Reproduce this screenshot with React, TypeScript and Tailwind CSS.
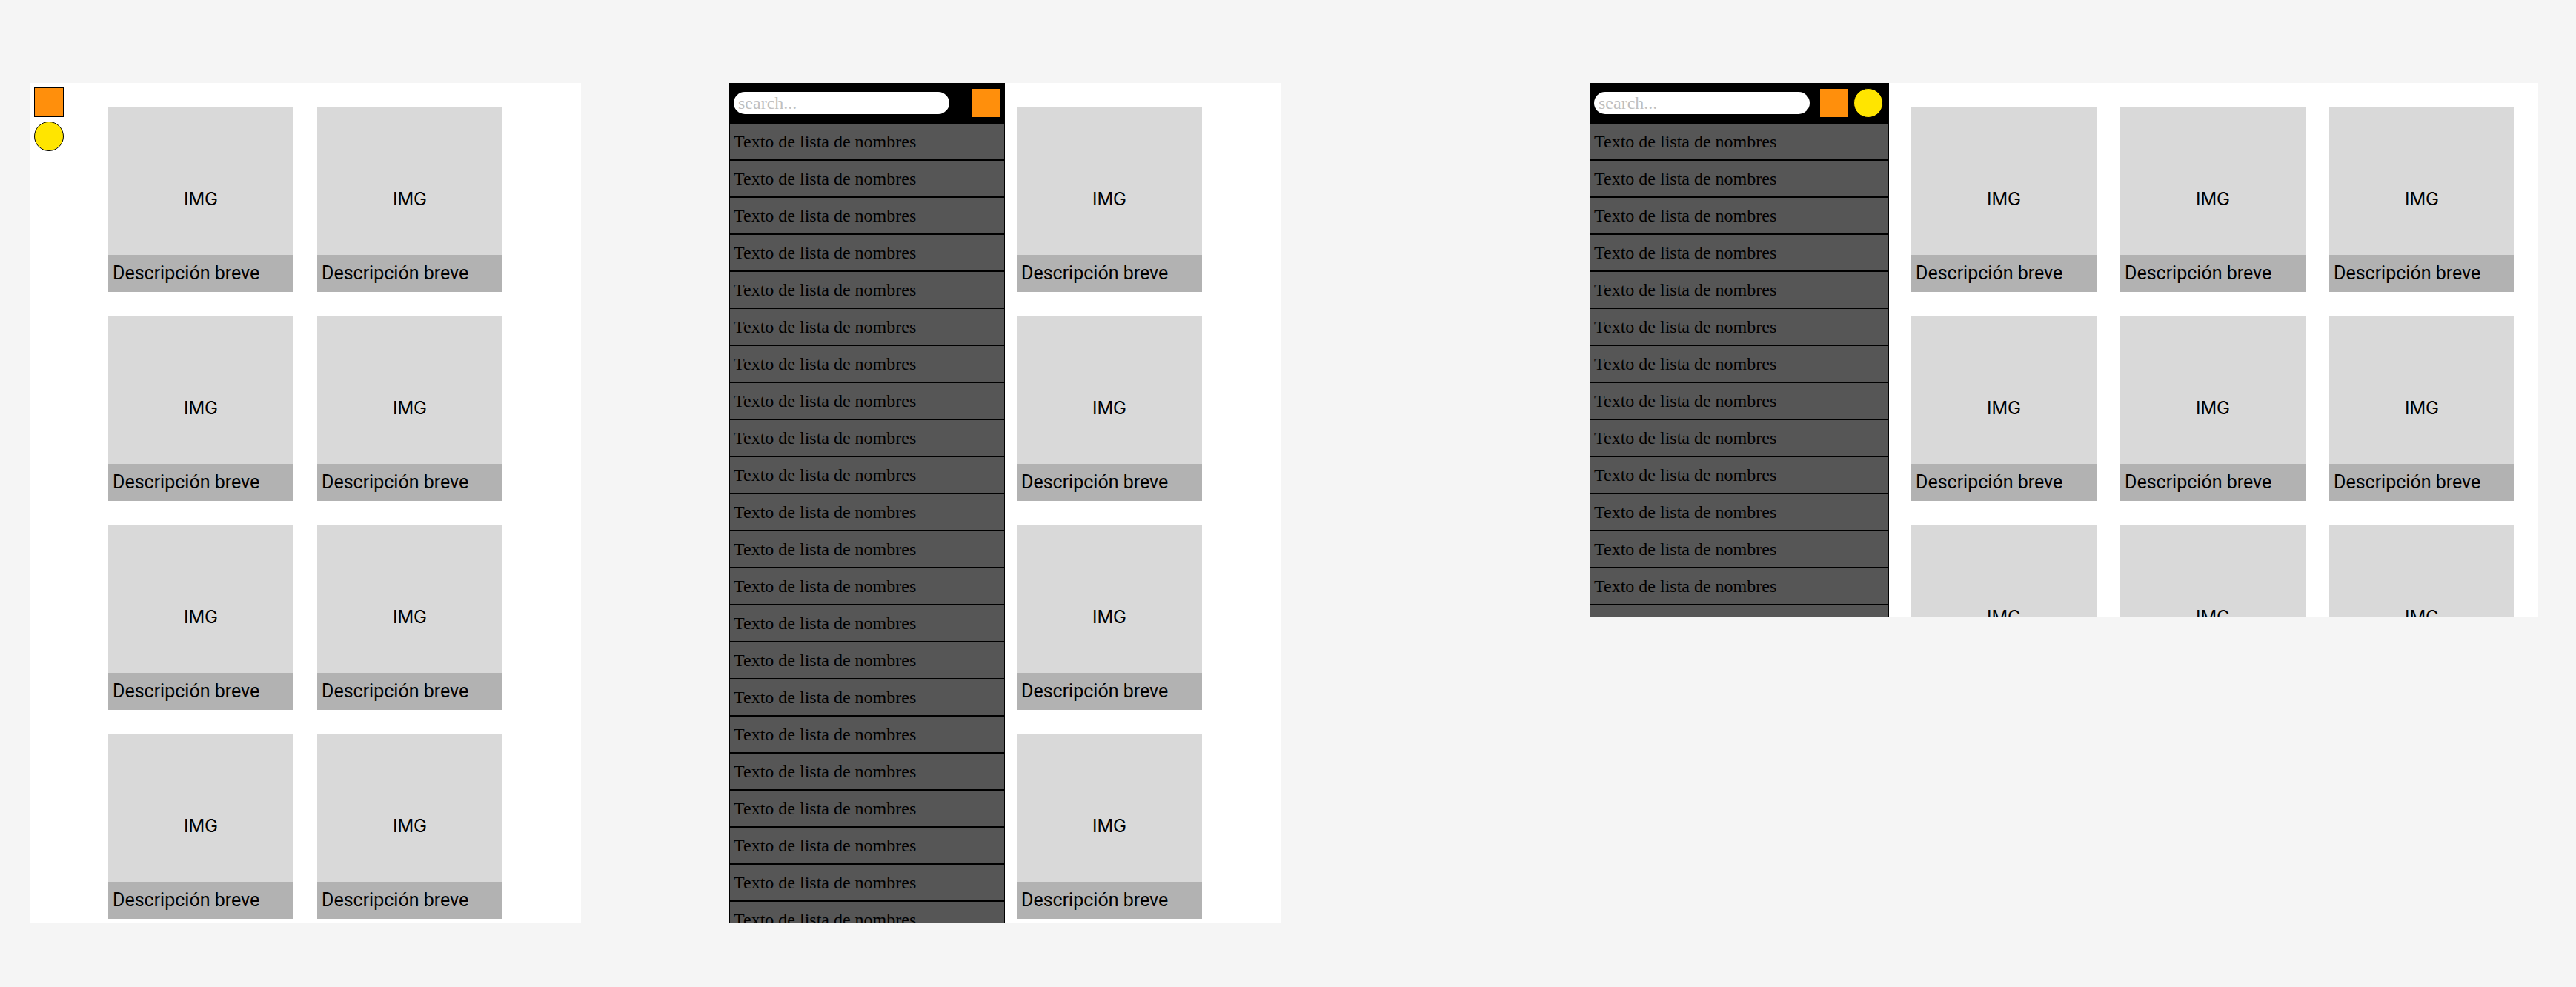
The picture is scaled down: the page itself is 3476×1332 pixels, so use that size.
const NAMES = Array.from({ length: 22 }, () => "Texto de lista de nombres");

function SquareButton() {
  return (
    <button
      type="button"
      aria-label="Lista"
      className="size-10 shrink-0 border border-black bg-[#ff8f0c]"
    />
  );
}

function RoundButton() {
  return (
    <button
      type="button"
      aria-label="Opciones"
      className="size-10 shrink-0 rounded-full border border-black bg-[#ffe500]"
    />
  );
}

function Card() {
  return (
    <article className="relative flex aspect-square items-center justify-center bg-[#d9d9d9]">
      <span className="font-['Inter',sans-serif] text-[24px] leading-7">IMG</span>
      <p className="absolute inset-x-0 bottom-0 flex h-[50px] items-center bg-[#b2b2b2] px-1.5 font-['Roboto',sans-serif] text-[25px] leading-8 whitespace-nowrap">
        Descripción breve
      </p>
    </article>
  );
}

function Cards({ count }: { count: number }) {
  return (
    <>
      {Array.from({ length: count }, (_, i) => (
        <Card key={i} />
      ))}
    </>
  );
}

function Sidebar({ id, wide = false }: { id: string; wide?: boolean }) {
  return (
    <aside
      className={
        wide
          ? "w-[404px] shrink-0 font-['Liberation_Serif',serif]"
          : "w-1/2 shrink-0 font-['Liberation_Serif',serif]"
      }
    >
      <header
        className={
          wide
            ? "flex h-[54px] items-center gap-1.5 bg-black pr-2 pl-1.5"
            : "flex h-[54px] items-center gap-1.5 bg-black px-1.5"
        }
      >
        <label htmlFor={id} className="sr-only">
          Buscar
        </label>
        <input
          id={id}
          type="text"
          placeholder="search..."
          className="mr-auto h-[30px] w-[291px] min-w-0 rounded-full bg-white px-1.5 text-[24px] leading-[30px] text-black outline-none placeholder:text-[#bfbfbf]"
        />
        <SquareButton />
        {wide && <RoundButton />}
      </header>
      <ul>
        {NAMES.map((name, i) => (
          <li
            key={i}
            className="flex h-[50px] items-center border border-black bg-[#565656] px-[5px] text-[24px] leading-7 whitespace-nowrap"
          >
            {name}
          </li>
        ))}
      </ul>
    </aside>
  );
}

export default function App() {
  return (
    <main className="flex min-h-screen items-start bg-[#f5f5f5] pt-28 pr-[51px] pb-20 pl-10 text-black">
      <section className="grid aspect-[744/1133] flex-[744] grid-cols-[1fr_auto_1fr] items-start overflow-hidden bg-white">
        <nav className="flex flex-col gap-1.5 p-1.5">
          <SquareButton />
          <RoundButton />
        </nav>
        <div className="grid grid-cols-[250px_250px] gap-8 py-8">
          <Cards count={8} />
        </div>
      </section>

      <section className="ml-[200px] flex aspect-[744/1133] flex-[744] items-start overflow-hidden bg-white">
        <Sidebar id="search-tablet" />
        <div className="grid grid-cols-[250px] gap-8 py-8 pl-4">
          <Cards count={4} />
        </div>
      </section>

      <section className="ml-[417px] flex aspect-[1280/720] flex-[1280] items-start overflow-hidden bg-white">
        <Sidebar id="search-desktop" wide />
        <div className="grid flex-1 grid-cols-3 gap-8 py-8 pr-8 pl-[30px]">
          <Cards count={9} />
        </div>
      </section>
    </main>
  );
}
